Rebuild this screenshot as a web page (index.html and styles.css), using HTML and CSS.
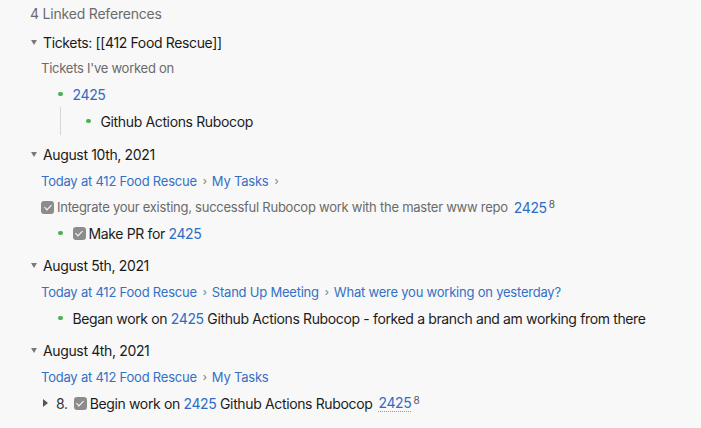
FILE: index.html
```html
<!DOCTYPE html>
<html>
<head>
<meta charset="utf-8">
<link rel="stylesheet" href="styles.css">
</head>
<body>
<div class="refs">
  <div class="title">4 Linked References</div>

  <section class="group">
    <div class="head"><span class="caret down"></span><span>Tickets: [[412 Food Rescue]]</span></div>
    <div class="muted-row">Tickets I've worked on</div>
    <div class="row l1"><span class="dot"></span><a class="link">2425</a></div>
    <div class="nest">
      <div class="row l2"><span class="dot"></span><span>Github Actions Rubocop</span></div>
    </div>
  </section>

  <section class="group">
    <div class="head"><span class="caret down"></span><span>August 10th, 2021</span></div>
    <div class="crumbs"><a>Today at 412 Food Rescue</a><span class="sep">›</span><a>My Tasks</a><span class="sep">›</span></div>
    <div class="muted-row task"><span class="cb"></span><span>Integrate your existing, successful Rubocop work with the master www repo</span><a class="link ref">2425</a><sup>8</sup></div>
    <div class="row l1"><span class="dot"></span><span class="cb"></span><span>Make PR for&nbsp;</span><a class="link">2425</a></div>
  </section>

  <section class="group">
    <div class="head"><span class="caret down"></span><span>August 5th, 2021</span></div>
    <div class="crumbs"><a>Today at 412 Food Rescue</a><span class="sep">›</span><a>Stand Up Meeting</a><span class="sep">›</span><a>What were you working on yesterday?</a></div>
    <div class="row l1"><span class="dot"></span><span>Began work on&nbsp;</span><a class="link">2425</a><span>&nbsp;Github Actions Rubocop - forked a branch and am working from there</span></div>
  </section>

  <section class="group">
    <div class="head"><span class="caret down"></span><span>August 4th, 2021</span></div>
    <div class="crumbs"><a>Today at 412 Food Rescue</a><span class="sep">›</span><a>My Tasks</a></div>
    <div class="row collapsed"><span class="caret right"></span><span class="num">8.</span><span class="cb"></span><span>Begin work on&nbsp;</span><a class="link">2425</a><span>&nbsp;Github Actions Rubocop</span><a class="link ref dotted">2425</a><sup>8</sup></div>
  </section>
</div>
</body>
</html>
```
FILE: styles.css
```css
* { box-sizing: border-box; }
html, body { margin: 0; padding: 0; background: #f8f8f8; }
body {
  font-family: Inter, "Noto Sans", sans-serif;
  font-size: 14px;
  letter-spacing: -0.36px;
  color: #1c1c1c;
  width: 701px;
  height: 428px;
  overflow: hidden;
}
.refs { padding-left: 30px; }
.title {
  height: 26px;
  display: flex;
  align-items: center;
  font-size: 14px;
  letter-spacing: -0.2px;
  color: #6b6b6b;
  margin-bottom: 3px;
}
.group { margin-bottom: 6px; }
.head {
  height: 26px;
  display: flex;
  align-items: center;
  font-size: 14px;
  color: #1a1a1a;
}
.caret { display: inline-block; width: 0; height: 0; flex: none; }
.caret.down {
  border-left: 3.5px solid transparent;
  border-right: 3.5px solid transparent;
  border-top: 5px solid #7a7a7a;
  margin: 0 6px 0 1px;
}
.caret.right {
  border-top: 4px solid transparent;
  border-bottom: 4px solid transparent;
  border-left: 5px solid #555;
  margin: 0 8px 0 13px;
}
.muted-row {
  height: 26px;
  display: flex;
  align-items: center;
  padding-left: 11px;
  font-size: 13px;
  letter-spacing: -0.25px;
  color: #6a6a6a;
  white-space: nowrap;
}
.row {
  height: 26px;
  display: flex;
  align-items: center;
  white-space: nowrap;
}
.l1 { padding-left: 28px; }
.nest { margin-left: 30px; border-left: 1px solid #d6d6d6; }
.nest .l2 { padding-left: 25px; height: 28px; }
.dot {
  width: 4.5px; height: 4.5px; border-radius: 50%;
  background: #4caf50;
  margin-right: 10px;
  flex: none;
}
.link { color: #2f6cc4; text-decoration: none; }
.crumbs {
  height: 27px;
  display: flex;
  align-items: center;
  padding-left: 11px;
  font-size: 13px;
  letter-spacing: -0.22px;
}
.crumbs a { color: #3470c4; }
.sep { color: #777; font-size: 11px; margin: 0 5px 0 6px; }
.cb {
  flex: none;
  width: 13px; height: 13px;
  border-radius: 3px;
  background: #8c8c8c;
  margin-right: 3px;
  position: relative;
}
.cb::after {
  content: "";
  position: absolute;
  left: 4.5px; top: 2px;
  width: 3px; height: 6px;
  border: solid #fff;
  border-width: 0 1.6px 1.6px 0;
  transform: rotate(45deg);
}
.task .ref { font-size: 14px; letter-spacing: -0.36px; }
.ref { margin-left: 6px; }
sup { font-size: 10px; color: #555; margin-left: 2px; align-self: flex-start; margin-top: 4px; letter-spacing: 0; }
.collapsed .num { margin-right: 6px; color: #333; }
.dotted { border-bottom: 1px dotted #999; line-height: 16px; }
```
